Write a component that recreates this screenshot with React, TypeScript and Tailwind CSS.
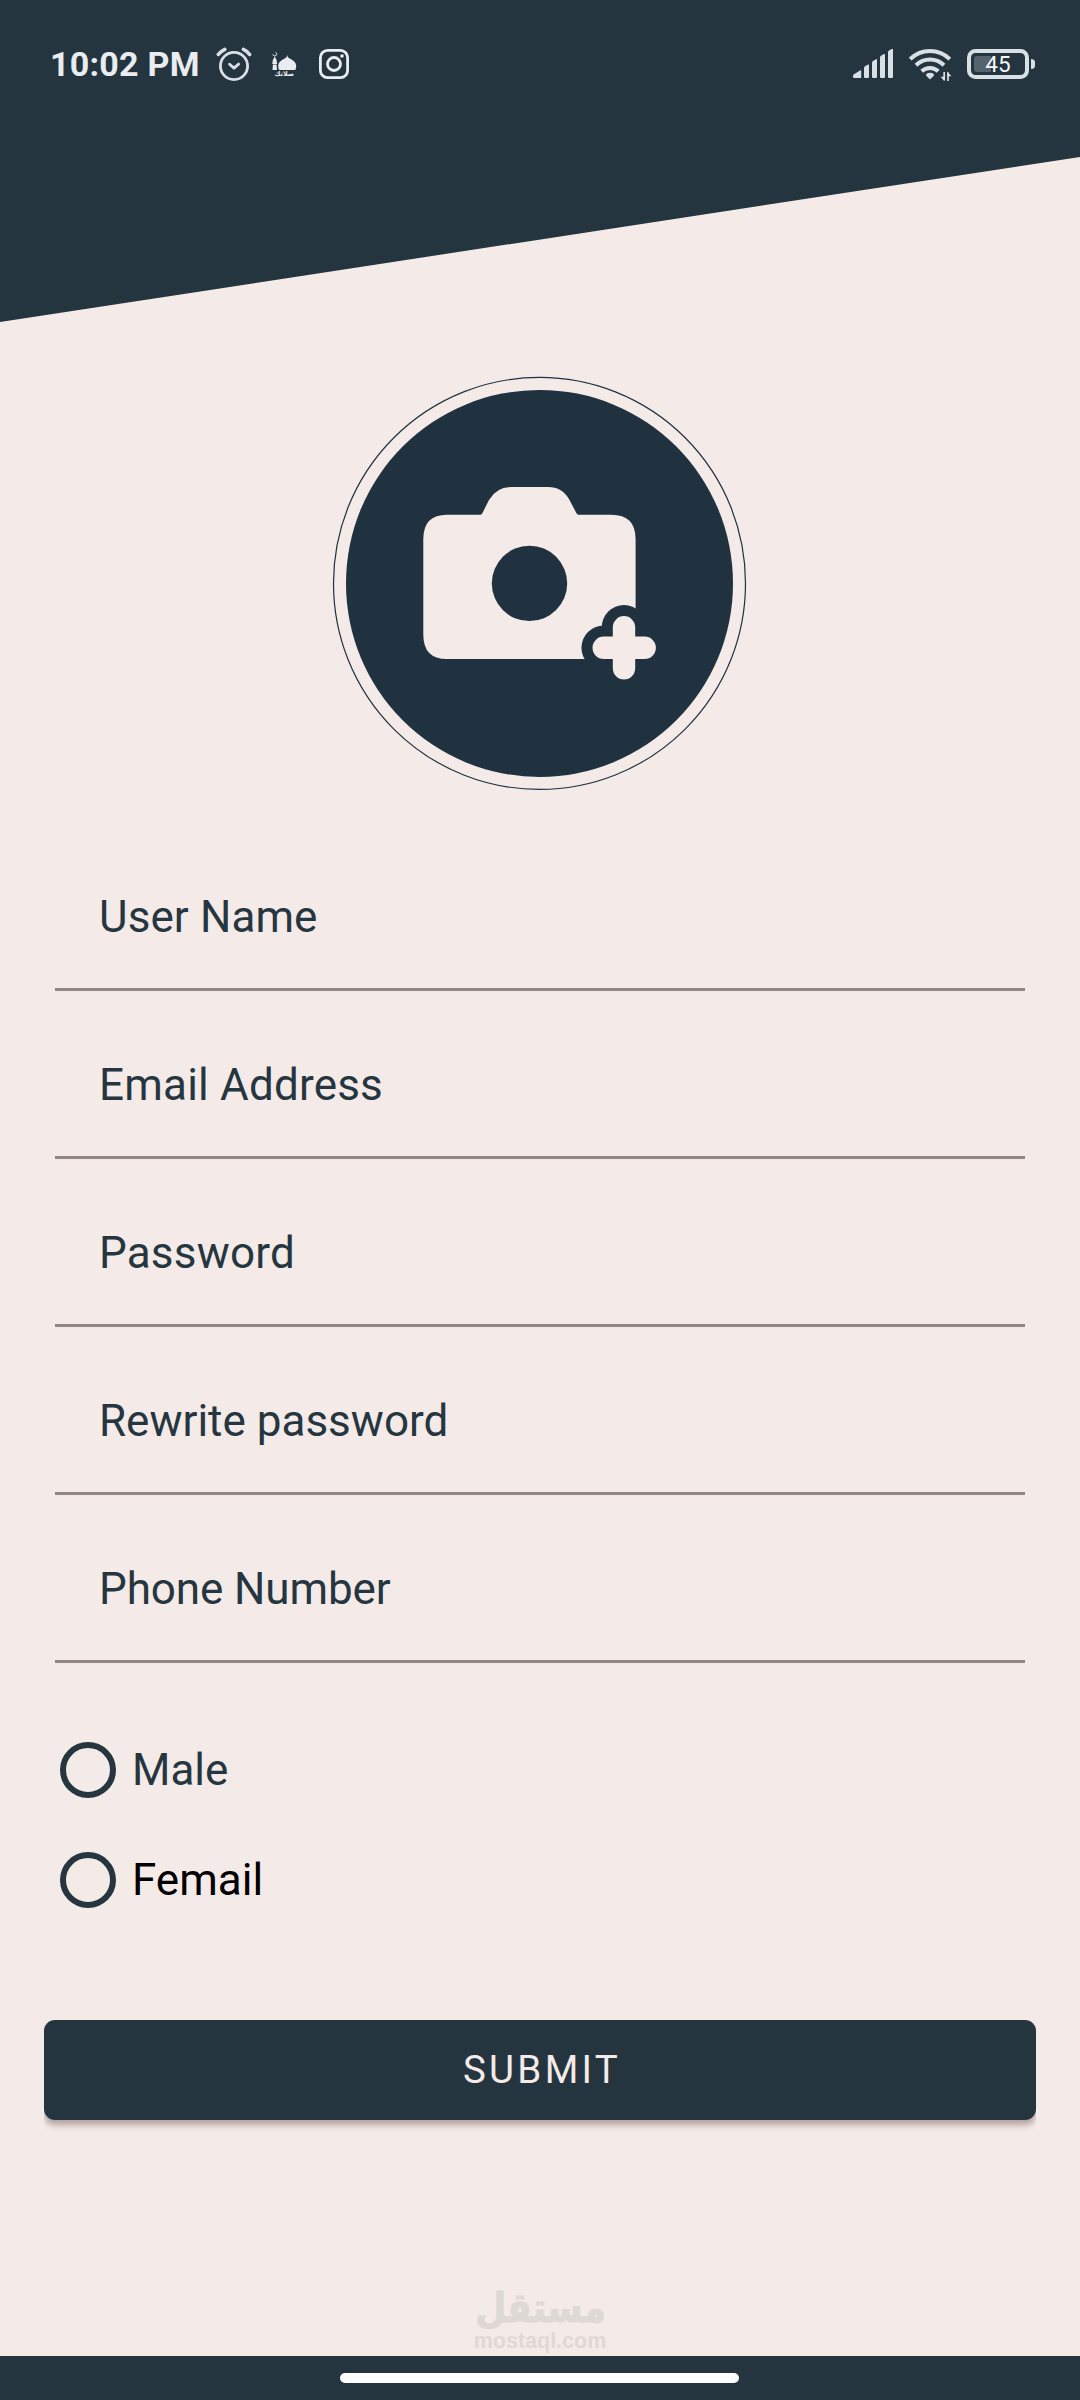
const FIELDS = [
  { name: "User Name", tracking: "tracking-[0.1px]" },
  { name: "Email Address", tracking: "tracking-[0.2px]" },
  { name: "Password", tracking: "tracking-[0.2px]" },
  { name: "Rewrite password", tracking: "tracking-normal" },
  { name: "Phone Number", tracking: "tracking-[-0.1px]" },
];

const GENDERS = [
  { label: "Male", color: "text-[#263640]" },
  { label: "Femail", color: "text-black" },
];

function AlarmIcon() {
  return (
    <svg className="ml-4 h-9 w-9 shrink-0" viewBox="216 46 36 36" fill="none" stroke="#d9e0e5" strokeLinecap="round" strokeLinejoin="round">
      <circle cx="234" cy="66" r="13.6" strokeWidth="2.8" />
      <path d="M229.6 64.2l4.4 3.9 4.6-4" strokeWidth="2.8" />
      <path d="M218.4 54.4q2.6-3.2 6.4-5M243.4 49.4q4 1.8 6.2 5" strokeWidth="3.6" />
    </svg>
  );
}

function MosqueIcon() {
  return (
    <svg className="ml-5 h-[26px] w-[26px] shrink-0" viewBox="272 50 26 26" fill="#e9edf0">
      <path d="M287.2 54l.7 2.3c2.3 1.9 8.3 3.7 8.3 8.7 0 1.6-.4 2.8-1 4.1h-16c-.6-1.3-1-2.5-1-4.1 0-5 6-6.8 8.3-8.700z" />
      <path d="M274.700 55.500l2 3.700v2.300h-4v-2.300zM272.300 61.500h4.800v1.500h-4.800zM272.900 63.400h3.700l.4 5.700h-4.500z" />
      <path d="M275.500 51.300a1.900 1.900 0 1 1-2.600 1.900" fill="none" stroke="#e9edf0" strokeWidth="1" />
      <text x="284.3" y="74.8" textAnchor="middle" fontSize="6.5" fontWeight="bold" fontFamily="DejaVu Sans, sans-serif">صلاتك</text>
    </svg>
  );
}

function InstagramIcon() {
  return (
    <svg className="ml-[21px] h-[30px] w-[30px] shrink-0" viewBox="319 49 30 30" fill="none" stroke="#e9edf0" strokeWidth="2.8">
      <rect x="320.4" y="50.4" width="27.2" height="27.2" rx="7.2" />
      <circle cx="334" cy="64" r="6.5" />
      <circle cx="342" cy="56" r="1.8" fill="#e9edf0" stroke="none" />
    </svg>
  );
}

function SignalIcon() {
  return (
    <svg className="h-[30px] w-10 shrink-0" viewBox="853 49 40 30" fill="#d9e0e5">
      <path d="M853 76q0-1.200 1-1.800l6-3.700q1.200-.5 1.200.8v6.700h-7.200q-1 0-1-1z" />
      <path d="M864 68q0-1.200 1-1.700l3-1.700q1-.4 1 .8v11.600q0 1-1 1h-3q-1 0-1-1z" />
      <path d="M872 62.700q0-1.200 1-1.700l3-1.800q1-.4 1 .8v17q0 1-1 1h-3q-1 0-1-1z" />
      <path d="M880 57.500q0-1.200 1-1.700l3-1.800q1-.4 1 .8v22.200q0 1-1 1h-3q-1 0-1-1z" />
      <path d="M888 52.200q0-1.200 1-1.700l3-1.600q1-.4 1 .8v27.300q0 1-1 1h-3q-1 0-1-1z" />
    </svg>
  );
}

function WifiIcon() {
  return (
    <svg className="ml-4 h-[34px] w-11 shrink-0" viewBox="909 47 44 34" fill="none" stroke="#d9e0e5" strokeWidth="4">
      <path d="M910.200 59.200a28.200 28.200 0 0 1 39.600 0" />
      <path d="M916 65.200a20 20 0 0 1 28 0" />
      <path d="M921.700 71.200a12.200 12.200 0 0 1 16.600 0" />
      <path d="M930 79.400l-4-4q0-2.200 4-2.600 4 .4 4 2.600z" fill="#d9e0e5" stroke="none" />
      <path d="M944.200 72v8M948 72.500v9" strokeWidth="1.7" />
      <path d="M940.600 76.800h4v4.800zM947.400 71.500v4.800h4z" fill="#d9e0e5" stroke="none" />
    </svg>
  );
}

function BatteryIcon() {
  return (
    <svg className="ml-3.5 h-[30px] w-[68px] shrink-0" viewBox="967 49 68 30">
      <rect x="969" y="51" width="58" height="26" rx="6.5" fill="none" stroke="#d9e0e5" strokeWidth="4" />
      <path d="M977 56h14v16h-14q-3 0-3-3v-10q0-3 3-3z" fill="#55636d" />
      <path d="M1031 59q4 0 4 3.500v3q0 3.500-4 3.500z" fill="#d9e0e5" />
      <text x="998" y="71.8" textAnchor="middle" fontSize="22.5" fontFamily="Roboto, sans-serif" fill="#f3f5f6">45</text>
    </svg>
  );
}

function StatusBar() {
  return (
    <div className="flex h-32 items-center pl-[50px] pr-[45px]">
      <span className="w-[150px] whitespace-nowrap text-[34px] font-bold leading-10 tracking-[0.25px] text-[#e9edf0]">10:02 PM</span>
      <AlarmIcon />
      <MosqueIcon />
      <InstagramIcon />
      <div className="ml-auto flex items-center">
        <SignalIcon />
        <WifiIcon />
        <BatteryIcon />
      </div>
    </div>
  );
}

function AvatarPicker() {
  return (
    <svg className="ml-[332px] mt-[54px] block h-[415px] w-[415px] shrink-0" viewBox="332 376 415 415" role="img" aria-label="Add photo">
      <circle cx="539.5" cy="583.4" r="206" fill="none" stroke="#20323f" strokeWidth="1.2" />
      <circle cx="539.5" cy="583.4" r="193.5" fill="#20323f" />
      <path
        fill="#f4eae7"
        d="M447 514.700h33.500q1.200 0 1.800-1.400l6.700-13.300q7.500-13 22-13h37q14.500 0 21.500 13l7 13.300q.6 1.400 1.800 1.400h33q24.300 0 24.300 24.300v120H447q-23.700 0-23.700-24.300V539q0-24.300 23.700-24.300z"
      />
      <circle cx="529.5" cy="583.4" r="37.7" fill="#20323f" />
      <g strokeLinecap="round" fill="none">
        <path d="M624 627.300v41M603.700 647.800h41" stroke="#20323f" strokeWidth="44.5" />
        <path d="M624 627.300v41M603.700 647.800h41" stroke="#f4eae7" strokeWidth="22.4" />
      </g>
    </svg>
  );
}

export default function App() {
  return (
    <div className="flex h-[2400px] w-[1080px] flex-col overflow-hidden bg-[#f4eae7] font-['Roboto',sans-serif]">
      <header className="h-[322px] shrink-0 bg-[#243540] [clip-path:polygon(0_0,100%_0,100%_157px,0_100%)]">
        <StatusBar />
      </header>

      <AvatarPicker />

      <form className="mt-[32px] flex flex-col">
        {FIELDS.map(({ name, tracking }) => (
          <div key={name} className="mx-[55px] flex h-[168px] items-end border-b-[3px] border-[#928583] pb-[45px] pl-11">
            <span className={`text-[44px] leading-[52px] text-[#263640] ${tracking}`}>{name}</span>
          </div>
        ))}

        <div className="mt-[52px] flex flex-col">
          {GENDERS.map(({ label, color }) => (
            <label key={label} className="flex h-[110px] items-center pl-[60px]">
              <span className="h-14 w-14 rounded-full border-[6px] border-[#263640]" />
              <span className={`ml-4 text-[44px] leading-[52px] ${color}`}>{label}</span>
            </label>
          ))}
        </div>

        <button
          type="button"
          className="mx-11 mt-[85px] h-[100px] rounded-[11px] bg-[#243540] pl-[4px] text-[38.5px] tracking-[3.3px] text-[#f4eae7] shadow-[0_5px_6px_rgba(60,30,30,0.35)] [clip-path:inset(0_0_-16px_0)]"
        >
          SUBMIT
        </button>
      </form>

      <div className="mt-auto flex h-[69px] flex-col items-center text-[#dfd9d6]">
        <span dir="rtl" className="h-[42px] origin-center translate-y-[2px] scale-x-[0.94] scale-y-[1.08] font-['DejaVu_Sans',sans-serif] text-[38px] font-bold leading-[38px] [-webkit-text-stroke:1px_#dfd9d6]">مستقل</span>
        <span className="font-['Liberation_Sans',sans-serif] text-[21.5px] font-bold leading-6">mostaql.com</span>
      </div>

      <footer className="flex h-11 shrink-0 items-center justify-center bg-[#243540] pr-[2px]">
        <div className="h-2.5 w-[399px] rounded-full bg-white" />
      </footer>
    </div>
  );
}
